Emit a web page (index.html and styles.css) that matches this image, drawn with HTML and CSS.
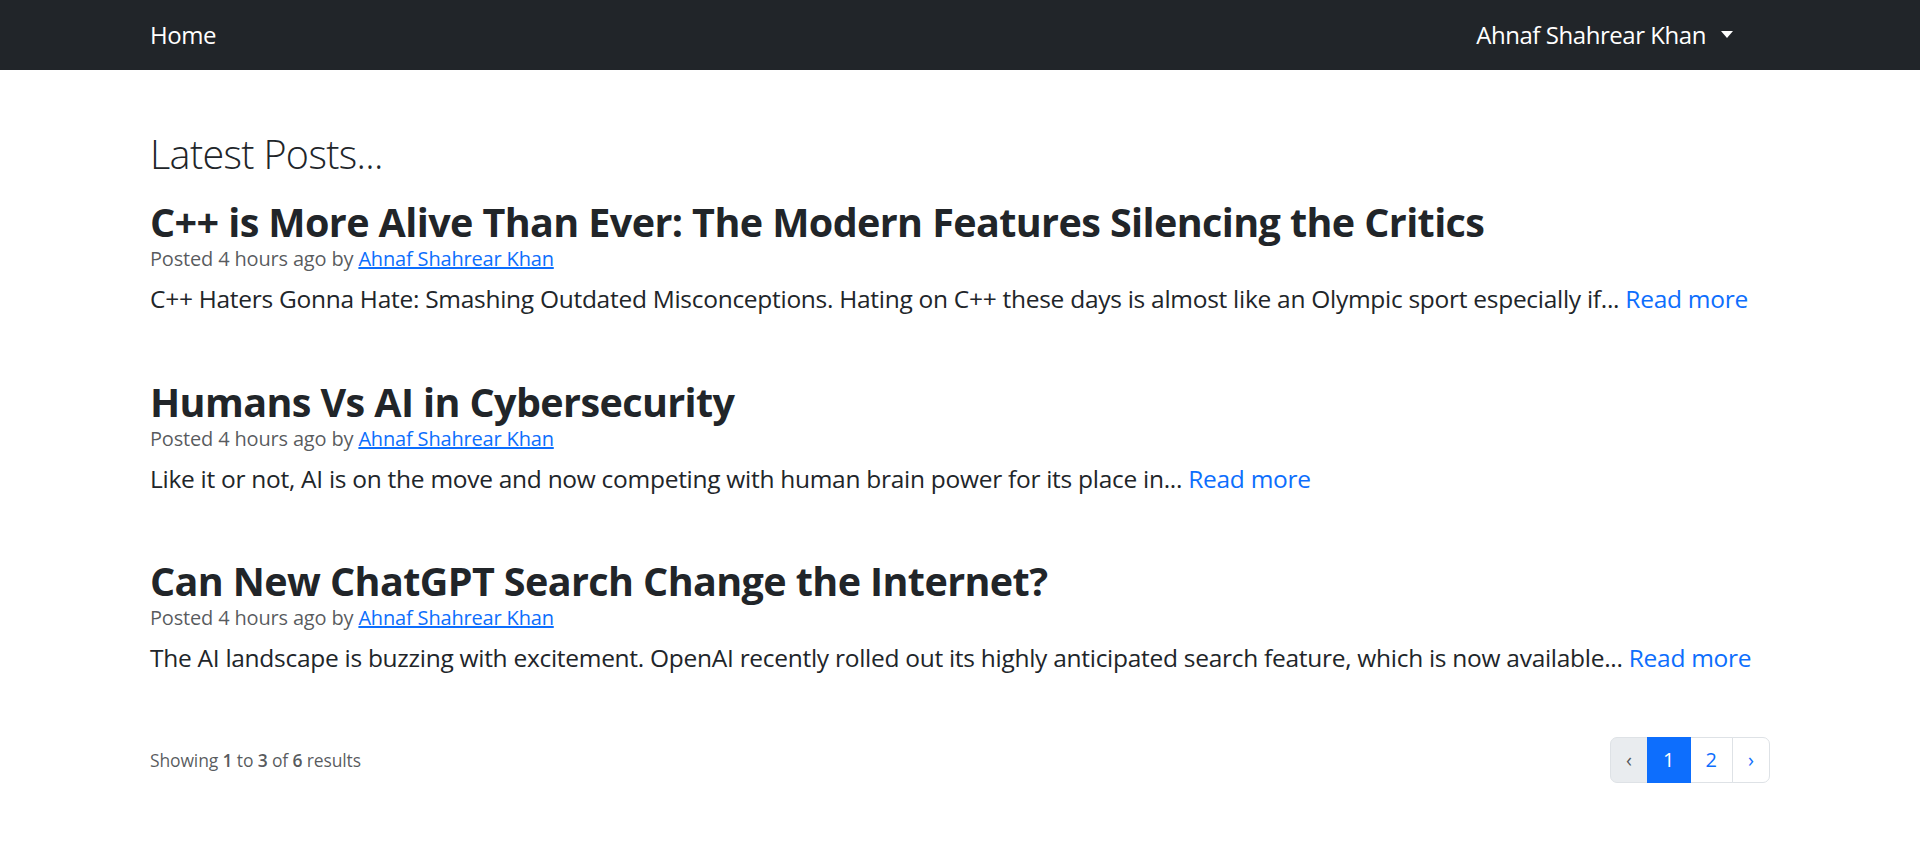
FILE: index.html
```html
<!DOCTYPE html>
<html lang="en">
<head>
<meta charset="utf-8">
<title>Latest Posts</title>
<link rel="stylesheet" href="styles.css">
</head>
<body>
<nav class="navbar">
  <div class="container navbar-inner">
    <a class="nav-home" href="#">Home</a>
    <a class="nav-user" href="#">Ahnaf Shahrear Khan<span class="caret"></span></a>
  </div>
</nav>
<main class="container main">
  <h2 class="page-title">Latest Posts...</h2>

  <article class="post">
    <h2 class="post-title">C++ is More Alive Than Ever: The Modern Features Silencing the Critics</h2>
    <div class="post-meta">Posted 4 hours ago by <a href="#">Ahnaf Shahrear Khan</a></div>
    <p class="post-body">C++ Haters Gonna Hate: Smashing Outdated Misconceptions. Hating on C++ these days is almost like an Olympic sport especially if... <a class="read-more" href="#">Read more</a></p>
  </article>

  <article class="post">
    <h2 class="post-title">Humans Vs AI in Cybersecurity</h2>
    <div class="post-meta">Posted 4 hours ago by <a href="#">Ahnaf Shahrear Khan</a></div>
    <p class="post-body">Like it or not, AI is on the move and now competing with human brain power for its place in... <a class="read-more" href="#">Read more</a></p>
  </article>

  <article class="post">
    <h2 class="post-title">Can New ChatGPT Search Change the Internet?</h2>
    <div class="post-meta">Posted 4 hours ago by <a href="#">Ahnaf Shahrear Khan</a></div>
    <p class="post-body">The AI landscape is buzzing with excitement. OpenAI recently rolled out its highly anticipated search feature, which is now available... <a class="read-more" href="#">Read more</a></p>
  </article>

  <div class="pager-row">
    <p class="pager-info">Showing <b>1</b> to <b>3</b> of <b>6</b> results</p>
    <ul class="pagination">
      <li class="page-item disabled"><span class="page-link">&lsaquo;</span></li>
      <li class="page-item active"><span class="page-link">1</span></li>
      <li class="page-item"><a class="page-link" href="#">2</a></li>
      <li class="page-item"><a class="page-link" href="#">&rsaquo;</a></li>
    </ul>
  </div>
</main>
</body>
</html>
```

FILE: styles.css
```css
* { box-sizing: border-box; }

body {
  margin: 0;
  font-family: "Open Sans", "Noto Sans", sans-serif;
  color: #212529;
  background: #fff;
}

.container {
  width: 1620px;
  margin: 0 auto;
}

.navbar {
  background: #212529;
  height: 70px;
}

.navbar-inner {
  display: flex;
  align-items: center;
  justify-content: space-between;
  height: 70px;
}

.nav-home,
.nav-user {
  color: #fff;
  text-decoration: none;
  font-size: 24px;
  letter-spacing: -0.45px;
  line-height: 70px;
}

.nav-user {
  display: flex;
  align-items: center;
  margin-right: 37px;
}

.caret {
  display: inline-block;
  margin-left: 15px;
  width: 0;
  height: 0;
  border-top: 7px solid #fff;
  border-left: 6px solid transparent;
  border-right: 6px solid transparent;
  margin-top: -2px;
}

.main {
  padding-top: 60px;
}

.page-title {
  margin: 0 0 22px;
  font-size: 39.5px;
  letter-spacing: -0.65px;
  font-weight: 300;
  line-height: 48px;
}

.post {
  margin-bottom: 62px;
}

.post-title {
  margin: 0;
  font-size: 39.5px;
  letter-spacing: -0.6px;
  font-weight: 700;
  line-height: 44px;
}

.post-meta {
  font-size: 20px;
  letter-spacing: -0.17px;
  line-height: 30px;
  color: rgba(33, 37, 41, 0.75);
  margin-bottom: 6px;
}

.post-meta a {
  color: #0d6efd;
  text-decoration: underline;
}

.post-body {
  margin: 0;
  font-size: 24.5px;
  letter-spacing: -0.28px;
  line-height: 37.5px;
}

.read-more {
  color: #0d6efd;
  text-decoration: none;
}

.pager-row {
  display: flex;
  align-items: center;
  justify-content: space-between;
  margin-top: -1.5px;
}

.pager-info {
  margin: 0;
  font-size: 17.5px;
  letter-spacing: -0.14px;
  line-height: 26px;
  color: rgba(33, 37, 41, 0.75);
}

.pager-info b {
  font-weight: 600;
}

.pagination {
  display: flex;
  list-style: none;
  margin: 0;
  padding: 0;
}

.page-link {
  display: block;
  font-size: 20px;
  line-height: 30px;
  padding: 7px 15px;
  border: 1px solid #dee2e6;
  color: #0d6efd;
  background: #fff;
  text-decoration: none;
  margin-left: -1px;
}

.page-item:first-child .page-link {
  margin-left: 0;
  border-radius: 7px 0 0 7px;
}

.page-item:last-child .page-link {
  border-radius: 0 7px 7px 0;
}

.page-item.disabled .page-link {
  background: #e9ecef;
  color: rgba(33, 37, 41, 0.75);
}

.page-item.active .page-link {
  background: #0d6efd;
  border-color: #0d6efd;
  color: #fff;
  position: relative;
}
```
